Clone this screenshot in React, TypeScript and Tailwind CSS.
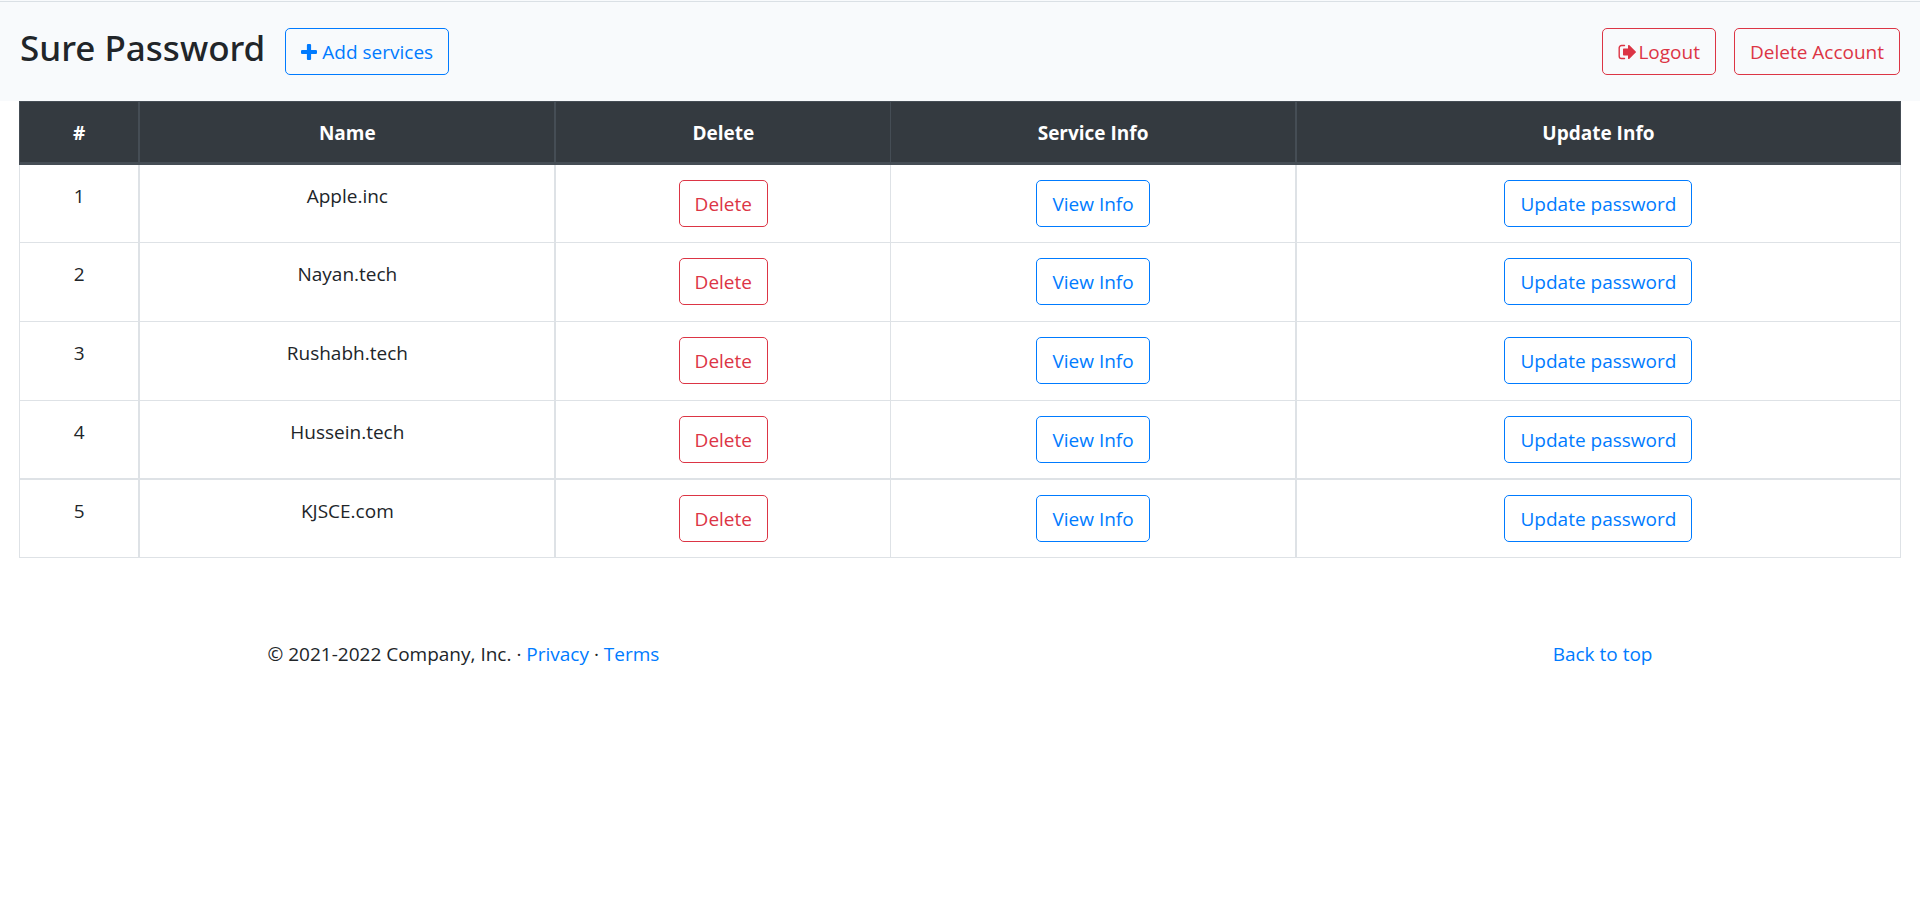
const services = ["Apple.inc", "Nayan.tech", "Rushabh.tech", "Hussein.tech", "KJSCE.com"];

const button = "inline-flex h-[47px] items-center rounded-[5px] border px-[15px] text-[19px] leading-[30px] whitespace-nowrap";
const primary = "border-[#007bff] text-[#007bff] hover:bg-[#007bff] hover:text-white";
const danger = "border-[#dc3545] text-[#dc3545] hover:bg-[#dc3545] hover:text-white";

const columns = [
  { label: "#", width: "w-[6.45%]", edge: "border-l border-r-2" },
  { label: "Name", width: "w-[22.1%]", edge: "border-r-2" },
  { label: "Delete", width: "w-[17.8%]", edge: "border-r" },
  { label: "Service Info", width: "w-[21.55%]", edge: "border-r-2" },
  { label: "Update Info", width: "w-[32.1%]", edge: "border-r" },
];

function PlusIcon() {
  return (
    <svg viewBox="0 0 16 16" className="mr-[5px] size-4 shrink-0" aria-hidden="true">
      <path
        d="M7 0h2a1.100 1.100 0 0 1 1.100 1.100V5.900H14.900A1.100 1.100 0 0 1 16 7V9a1.100 1.100 0 0 1-1.100 1.100H10.100V14.900A1.100 1.100 0 0 1 9 16H7a1.100 1.100 0 0 1-1.100-1.100V10.100H1.100A1.100 1.100 0 0 1 0 9V7A1.100 1.100 0 0 1 1.100 5.900H5.900V1.100A1.100 1.100 0 0 1 7 0Z"
        fill="currentColor"
      />
    </svg>
  );
}

function LogoutIcon() {
  return (
    <svg viewBox="0 0 18 16" className="mr-0.5 h-4 w-[18px] shrink-0" aria-hidden="true">
      <path
        d="M6.500 1.500H3.500a2.300 2.300 0 0 0-2.300 2.300v8.400a2.300 2.300 0 0 0 2.300 2.300h3"
        fill="none"
        stroke="currentColor"
        strokeWidth="1.4"
        strokeLinecap="round"
      />
      <path
        d="M11.200 1.100 17.700 7.400a.8.8 0 0 1 0 1.200L11.200 14.900c-.5.4-1.200.1-1.200-.5V11.500H5.700a.7.7 0 0 1-.7-.7V5.200a.7.7 0 0 1 .7-.7H10V1.600c0-.6.7-.9 1.200-.5Z"
        fill="currentColor"
      />
    </svg>
  );
}

export default function App() {
  return (
    <div className="min-h-screen bg-white font-['Open_Sans','Noto_Sans',sans-serif] text-[19px] leading-[30px] text-[#212529]">
      <div className="bg-[#f8fafc] pt-px">
        <header className="flex h-[100px] items-start justify-between border-t border-[#dae0e5] px-5 pt-[26px]">
          <div className="flex items-start gap-5">
            <h1 className="-mt-1 font-['Noto_Sans',sans-serif] text-[35px] leading-[48px] font-medium">Sure Password</h1>
            <button type="button" className={`${button} ${primary}`}>
              <PlusIcon />
              Add services
            </button>
          </div>
          <div className="flex gap-[18px]">
            <button type="button" className={`${button} ${danger}`}>
              <LogoutIcon />
              Logout
            </button>
            <button type="button" className={`${button} ${danger}`}>
              Delete Account
            </button>
          </div>
        </header>
      </div>

      <main className="px-[19px]">
        <table className="w-full table-fixed border-separate border-spacing-0 text-center">
          <thead>
            <tr className="h-16 bg-[#343a40] text-white">
              {columns.map((c) => (
                <th key={c.label} scope="col" className={`border-t border-b-[3px] border-[#454d55] pt-0.5 font-bold ${c.width} ${c.edge}`}>
                  {c.label}
                </th>
              ))}
            </tr>
          </thead>
          <tbody className="[&_td]:border-[#dee2e6] [&_td]:align-top">
            {services.map((name, i) => {
              const line = i === services.length - 2 ? "border-b-2" : "border-b";
              return (
                <tr key={name} className="h-[79px] first:h-[78px] last:h-[78px]">
                  <td className={`pt-4 ${line} ${columns[0].edge}`}>{i + 1}</td>
                  <td className={`pt-4 ${line} ${columns[1].edge}`}>{name}</td>
                  <td className={`pt-[15px] ${line} ${columns[2].edge}`}>
                    <button type="button" className={`${button} ${danger} align-top`}>Delete</button>
                  </td>
                  <td className={`pt-[15px] ${line} ${columns[3].edge}`}>
                    <button type="button" className={`${button} ${primary} align-top`}>View Info</button>
                  </td>
                  <td className={`pt-[15px] ${line} ${columns[4].edge}`}>
                    <button type="button" className={`${button} ${primary} align-top`}>Update password</button>
                  </td>
                </tr>
              );
            })}
          </tbody>
        </table>
      </main>

      <footer className="mx-auto mt-20 flex max-w-[1425px] justify-between px-5 pt-px">
        <p>
          © 2021-2022 Company, Inc. · <a href="#" className="text-[#007bff] hover:underline">Privacy</a> ·{" "}
          <a href="#" className="text-[#007bff] hover:underline">Terms</a>
        </p>
        <a href="#" className="text-[#007bff] hover:underline">Back to top</a>
      </footer>
    </div>
  );
}
